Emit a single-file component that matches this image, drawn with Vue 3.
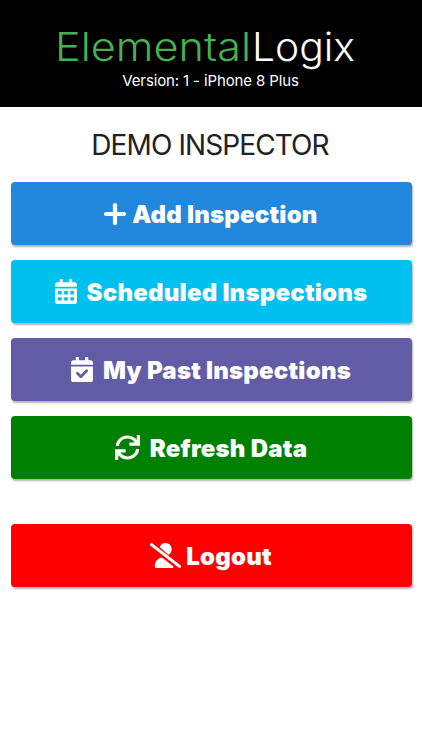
<template>
  <div class="page">
    <header class="header">
      <svg class="logo" width="422" height="50" viewBox="0 0 422 50">
        <text x="55" y="38" fill="#45b152" textLength="196" lengthAdjust="spacingAndGlyphs">Elemental</text>
        <text x="252" y="38" fill="#fff" textLength="103" lengthAdjust="spacingAndGlyphs">Logix</text>
      </svg>
      <div class="version">Version: 1 - iPhone 8 Plus</div>
    </header>
    <h1 class="name">DEMO INSPECTOR</h1>
    <main class="menu">
      <button v-for="item in items" :key="item.id" :class="['btn', item.id]">
        <svg class="icon" :viewBox="item.viewBox">
          <path v-for="d in item.paths" :key="d" :d="d" fill="currentColor" fill-rule="evenodd" />
        </svg>
        <span class="label">{{ item.label }}</span>
      </button>
    </main>
  </div>
</template>

<script setup>
const calendarTop = 'M0 160V112c0-26.500 21.500-48 48-48H96V16q0-16 16-16h32q16 0 16 16V64H288V16q0-16 16-16h32q16 0 16 16V64h48c26.500 0 48 21.500 48 48v48z'

const items = [
  {
    id: 'add',
    label: 'Add Inspection',
    viewBox: '0 0 416 416',
    paths: ['M248 40c0-22-18-40-40-40s-40 18-40 40V168H40c-22 0-40 18-40 40s18 40 40 40H168V376c0 22 18 40 40 40s40-18 40-40V248H376c22 0 40-18 40-40s-18-40-40-40H248V40z']
  },
  {
    id: 'scheduled',
    label: 'Scheduled Inspections',
    viewBox: '0 0 448 512',
    paths: [
      calendarTop,
      'M0 192H448V464c0 26.500-21.500 48-48 48H48c-26.500 0-48-21.500-48-48zM60 248v70h76v-70zM186 248v70h76v-70zM312 248v70h76v-70zM60 372v70h76v-70zM186 372v70h76v-70zM312 372v70h76v-70z'
    ]
  },
  {
    id: 'past',
    label: 'My Past Inspections',
    viewBox: '0 0 448 512',
    paths: [
      calendarTop,
      'M0 192H448V464c0 26.500-21.500 48-48 48H48c-26.500 0-48-21.500-48-48zM340 302c12-12 12-28 0-39s-28-12-39 0l-101 101-50-50c-12-12-28-12-39 0s-12 28 0 39l70 70c11 11 27 11 38 0z'
    ]
  },
  {
    id: 'refresh',
    label: 'Refresh Data',
    viewBox: '0 0 512 512',
    paths: [
      'M16 224C24 96 130 8 256 8c76 0 144 34 190 88V0h66V218H294V152H402C370 104 316 74 256 74 164 74 90 138 82 224z',
      'M496 288C488 416 382 504 256 504c-76 0-144-34-190-88v96H0V294H218v66H110c32 48 86 78 146 78 92 0 166-64 174-150z'
    ]
  },
  {
    id: 'logout',
    label: 'Logout',
    viewBox: '0 0 640 512',
    paths: [
      'M52 6C38-5 17-3 6 11S-3 46 11 57l577 449c14 11 35 9 46-5s9-35-5-46z',
      'M200 83C217 34 264 0 320 0c71 0 128 57 128 128 0 52-28 95-71 115z',
      'M97 483C97 384 165 304 246 298L484 484C487 500 480 512 467 512H126C110 512 97 499 97 483z'
    ]
  }
]
</script>

<style>
body {
  margin: 0;
  background: #fff;
}
</style>

<style scoped>
.page {
  min-height: 750px;
  font-family: Inter, "Liberation Sans", sans-serif;
  color: #212121;
}

.header {
  height: 107px;
  box-sizing: border-box;
  padding-top: 23px;
  background: #000;
  color: #fff;
  text-align: center;
}

.logo {
  display: block;
  font-size: 39px;
  font-weight: 300;
}

.version {
  font-size: 15px;
  line-height: 18px;
  margin-top: -1px;
  padding-right: 1px;
  letter-spacing: -0.13px;
}

.name {
  margin: 22px 0 20px;
  padding-right: 2px;
  font-size: 28px;
  line-height: 33px;
  font-weight: 400;
  letter-spacing: -0.9px;
  text-align: center;
}

.menu {
  display: flex;
  flex-direction: column;
  gap: 15px;
  padding: 0 10.5px;
}

.btn {
  display: flex;
  align-items: center;
  justify-content: center;
  height: 63px;
  padding: 0;
  border: none;
  border-radius: 4px;
  color: #fff;
  font-family: inherit;
  font-size: 24px;
  font-weight: 900;
  letter-spacing: 0.22px;
  box-shadow: 1px 2px 2px rgba(0, 0, 0, 0.3);
}

.icon {
  flex: none;
  width: 22px;
  height: 25px;
  margin-right: 10px;
}

.label {
  padding-top: 2px;
  white-space: nowrap;
}

.add {
  background: #2288dd;
}

.add .icon {
  height: 22px;
  margin-right: 6px;
}

.scheduled {
  background: #00c0f0;
}

.past {
  background: #625ba6;
}

.refresh {
  background: #008000;
}

.refresh .icon {
  width: 25px;
}

.logout {
  margin-top: 30px;
  background: #ff0000;
}

.logout .icon {
  width: 31px;
  margin-right: 5px;
}
</style>
